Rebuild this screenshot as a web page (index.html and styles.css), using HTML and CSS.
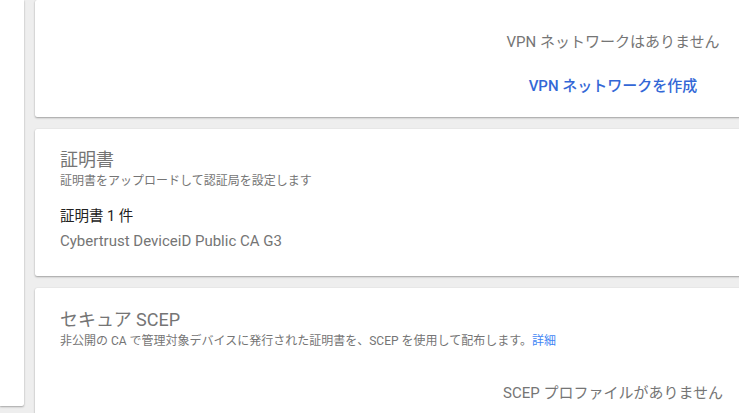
FILE: index.html
```html
<!DOCTYPE html>
<html lang="ja">
<head>
<meta charset="utf-8">
<link rel="stylesheet" href="styles.css">
</head>
<body>
<div class="page">
  <aside class="side"></aside>
  <main class="main">
    <section class="card card-vpn">
      <div class="empty">
        <div class="empty-text">VPN ネットワークはありません</div>
        <a class="action">VPN ネットワークを作成</a>
      </div>
    </section>
    <section class="card card-cert">
      <h2 class="title">証明書</h2>
      <p class="sub">証明書をアップロードして認証局を設定します</p>
      <div class="count">証明書 1 件</div>
      <div class="item">Cybertrust DeviceiD Public CA G3</div>
    </section>
    <section class="card card-scep">
      <h2 class="title">セキュア SCEP</h2>
      <p class="sub">非公開の CA で管理対象デバイスに発行された証明書を、SCEP を使用して配布します。<a class="more">詳細</a></p>
      <div class="empty empty-scep">
        <div class="empty-text">SCEP プロファイルがありません</div>
      </div>
    </section>
  </main>
</div>
</body>
</html>
```
FILE: styles.css
```css
html, body {
  margin: 0;
  padding: 0;
  height: 100%;
  overflow: hidden;
  background: #eeeeee;
  font-family: Roboto, "Noto Sans CJK JP", sans-serif;
}
.page {
  display: flex;
  align-items: flex-start;
  gap: 11px;
  height: 413px;
}
.side {
  width: 24px;
  height: 406px;
  flex: none;
  background: #fff;
  border-radius: 0 0 2px 0;
  box-shadow: 0 1px 2px rgba(0,0,0,0.3), 0 0 1px rgba(0,0,0,0.12);
}
.main {
  flex: none;
  width: 720px;
  display: flex;
  flex-direction: column;
  gap: 12px;
}
.card {
  background: #fff;
  border-radius: 2px;
  box-shadow: 0 1px 2px rgba(0,0,0,0.32), 0 0 1px rgba(0,0,0,0.12);
  box-sizing: border-box;
}
.card-vpn {
  height: 117px;
  padding-top: 32px;
}
.empty {
  width: 260px;
  margin-left: auto;
  margin-right: 12px;
  display: flex;
  flex-direction: column;
  align-items: center;
}
.empty-text {
  font-size: 15px;
  line-height: 20px;
  color: #757575;
}
.action {
  margin-top: 24px;
  font-size: 15px;
  line-height: 20px;
  font-weight: 500;
  color: #3367d6;
}
.card-cert {
  height: 147px;
  padding: 19px 25px 0;
}
.title {
  margin: 0;
  font-size: 18px;
  line-height: 24px;
  font-weight: 400;
  color: #757575;
}
.sub {
  margin: 1px 0 0;
  font-size: 12px;
  line-height: 16px;
  color: #757575;
}
.more {
  color: #4285f4;
}
.count {
  margin-top: 18px;
  font-size: 14.5px;
  line-height: 20px;
  color: #212121;
}
.item {
  margin-top: 4px;
  font-size: 15px;
  line-height: 20px;
  color: #757575;
}
.card-scep {
  height: 140px;
  padding: 20px 25px 0;
}
.empty-scep {
  margin-top: 34px;
  margin-right: -13px;
}
```
